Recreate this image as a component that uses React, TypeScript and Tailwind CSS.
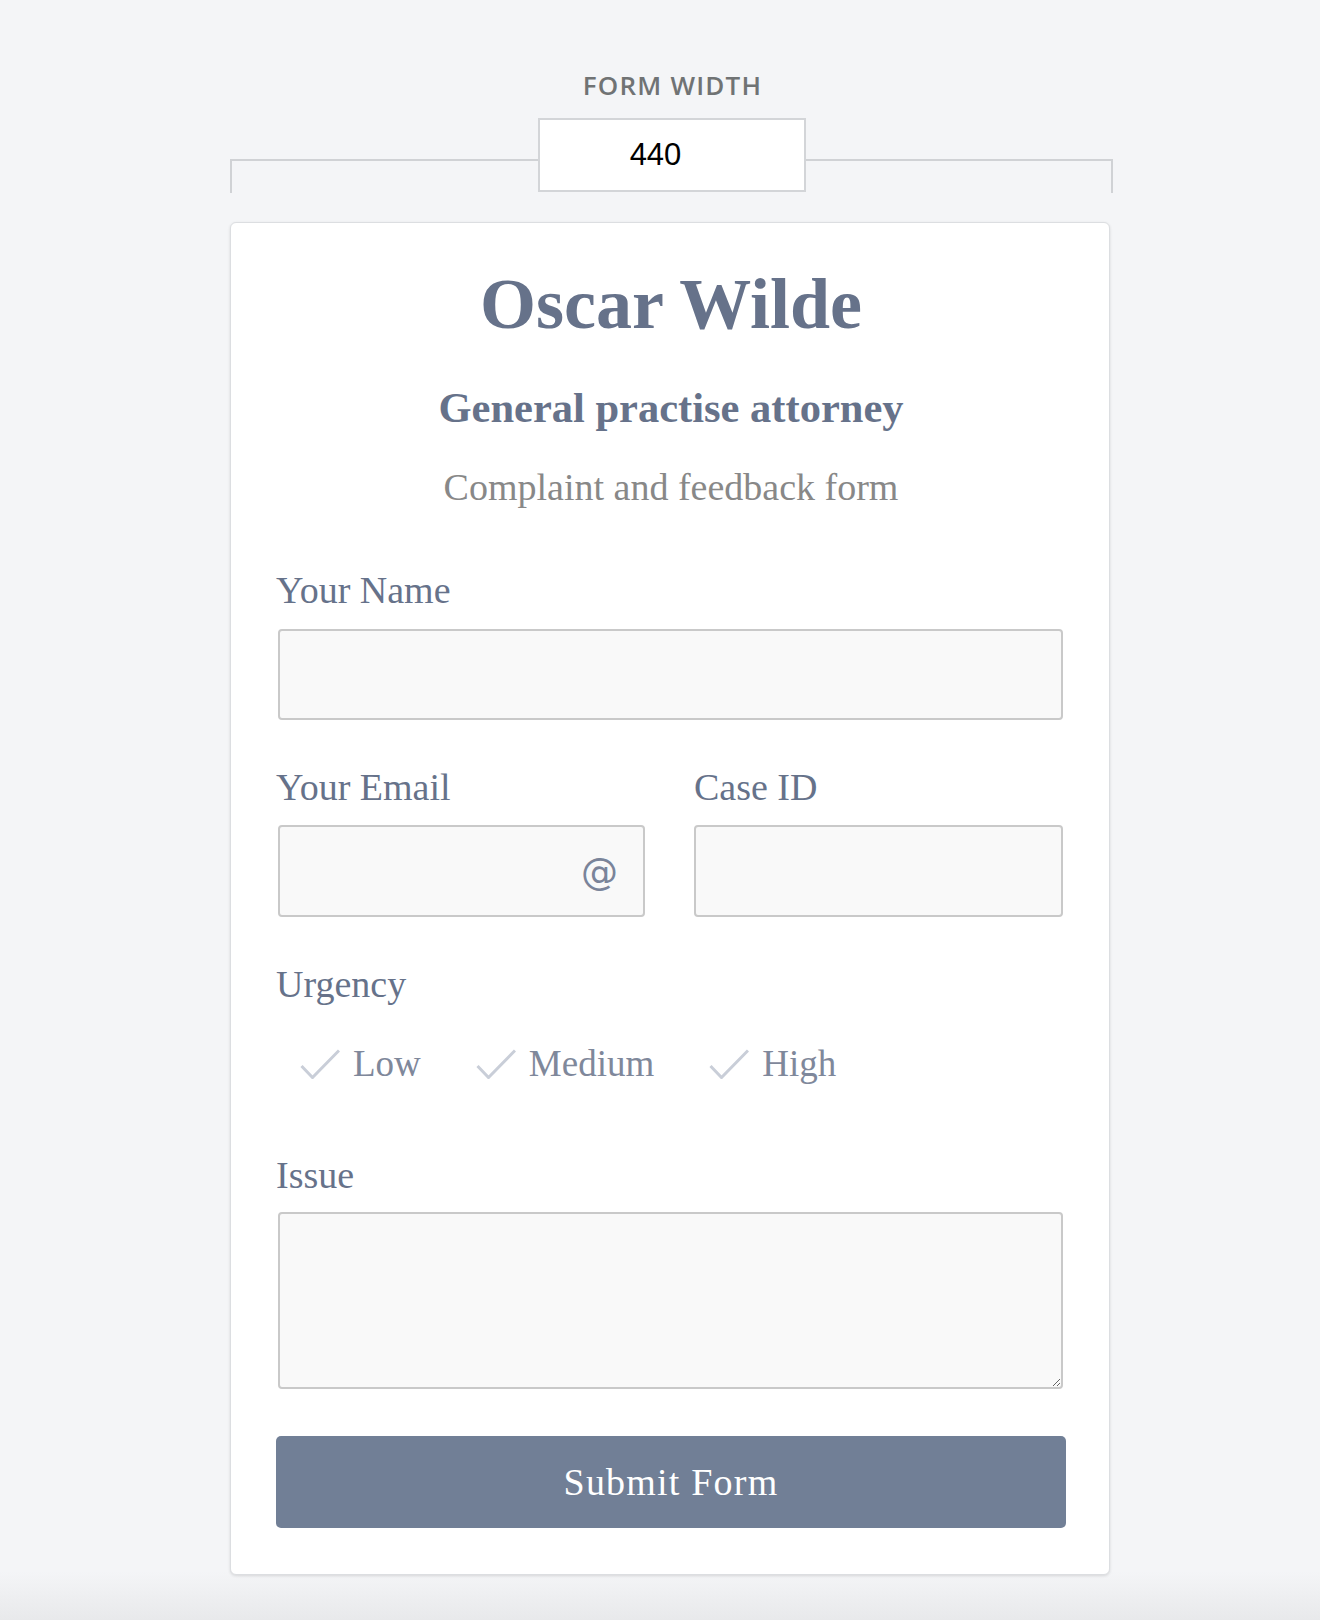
import { useState } from "react";

const serif = "font-['Liberation_Serif',serif]";

const urgencies = ["Low", "Medium", "High"];

function Check() {
  return (
    <svg width="40" height="30" viewBox="0 0 40 30" fill="none" className="shrink-0">
      <polyline
        points="1.5,17 12.5,28.5 39,1.5"
        stroke="#c9ced8"
        strokeWidth="3"
        strokeLinecap="butt"
        strokeLinejoin="miter"
      />
    </svg>
  );
}

function Label({ children }: { children: React.ReactNode }) {
  return <label className={`block text-[38px] leading-[44px] text-[#66728a] ${serif}`}>{children}</label>;
}

const inputCls = "block rounded-[4px] border-2 border-[#c9c9c9] bg-[#f9f9f9] outline-none";

export default function App() {
  const [width, setWidth] = useState("440");
  return (
    <div className="min-h-[1620px] bg-[linear-gradient(to_bottom,#f4f5f7_0%,#f4f5f7_97%,#e8e9eb_100%)] pt-[69px]">
      <div className="ml-[230px] w-[883px]">
        <p className="text-center font-['Open_Sans',sans-serif] text-[26px] leading-[32px] font-semibold tracking-[1.2px] text-[#707374] pl-[2px]">
          FORM WIDTH
        </p>
        <div className="mt-[17px] flex items-end">
          <div className="h-[34px] flex-1 border-l-2 border-t-2 border-[#d0d2d5]" />
          <input
            value={width}
            onChange={(e) => setWidth(e.target.value)}
            className="mb-px h-[74px] w-[268px] border-2 border-[#d3d5d8] bg-white pr-[32px] text-center font-['Liberation_Sans',sans-serif] text-[31px] text-black outline-none"
          />
          <div className="h-[34px] flex-1 border-r-2 border-t-2 border-[#d0d2d5]" />
        </div>

        <form
          className="mt-[29px] w-[880px] rounded-[6px] border border-[#dcdee1] bg-white pl-[45px] pr-[43px] pt-[45px] pb-[46px] shadow-[0_1px_3px_rgba(0,0,0,0.12)]"
          onSubmit={(e) => e.preventDefault()}
        >
          <h1 className={`text-center text-[72px] leading-[72px] font-bold text-[#66728a] ${serif}`}>Oscar Wilde</h1>
          <h2 className={`mt-[44px] text-center text-[42.5px] leading-[48px] font-bold text-[#66728a] ${serif}`}>
            General practise attorney
          </h2>
          <p className={`mt-[33px] text-center text-[38px] leading-[44px] text-[#888888] ${serif}`}>
            Complaint and feedback form
          </p>

          <div className="mt-[59px]">
            <Label>Your Name</Label>
            <input className={`${inputCls} ml-[2px] mt-[17px] h-[91px] w-[785px]`} />
          </div>

          <div className="mt-[45px] flex gap-[48px]">
            <div className="w-[370px]">
              <Label>Your Email</Label>
              <div className={`${inputCls} ml-[2px] mt-[16px] flex h-[92px] w-[367px] items-center justify-end pr-[25px]`}>
                <span className="font-['DejaVu_Sans',sans-serif] text-[37px] leading-none text-[#7a849a]">@</span>
              </div>
            </div>
            <div>
              <Label>Case ID</Label>
              <input className={`${inputCls} mt-[16px] h-[92px] w-[369px]`} />
            </div>
          </div>

          <div className="mt-[45px]">
            <Label>Urgency</Label>
            <div className="mt-[36px] flex h-[44px] items-center gap-[55px] pl-[24px]">
              {urgencies.map((u) => (
                <div key={u} className="flex items-center gap-[13px]">
                  <Check />
                  <span className={`text-[37px] leading-[44px] text-[#7f889b] ${serif}`}>{u}</span>
                </div>
              ))}
            </div>
          </div>

          <div className="mt-[67px]">
            <Label>Issue</Label>
            <textarea className={`${inputCls} ml-[2px] mt-[15px] h-[177px] w-[785px] resize`} />
          </div>

          <button
            type="submit"
            className={`mt-[47px] h-[92px] w-full rounded-[5px] bg-[#717f96] text-[38px] tracking-[1.2px] text-white ${serif}`}
          >
            Submit Form
          </button>
        </form>
      </div>
    </div>
  );
}
